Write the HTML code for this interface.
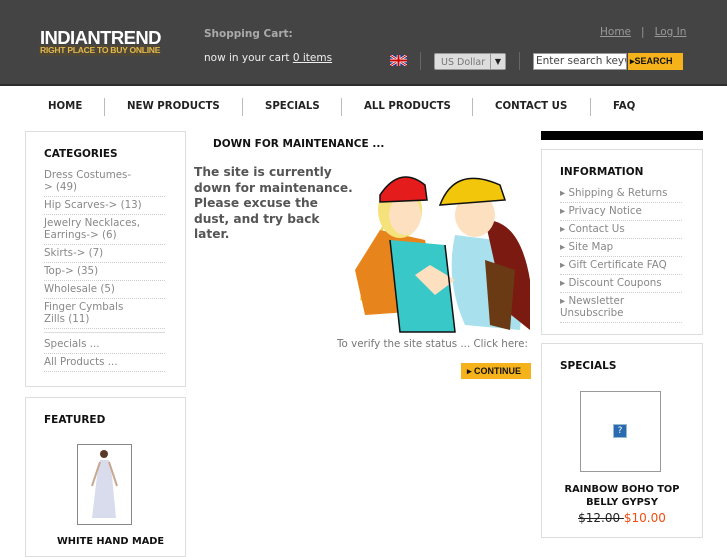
<!DOCTYPE html>
<html><head><meta charset="utf-8"><style>
*{margin:0;padding:0;box-sizing:border-box}
body{width:727px;height:545px;overflow:hidden;background:#fff;font-family:"DejaVu Sans","Liberation Sans",sans-serif;position:relative}
.a{position:absolute}
.hdr{left:0;top:0;width:727px;height:86px;background:#444;border-bottom:2px solid #2e2e2e}
.nav{font-size:10.2px;font-weight:bold;color:#222;top:101px}
.sep{top:98px;width:1px;height:18px;background:#bbb}
.box{border:1px solid #ddd;background:#fff}
.h{font-size:10.5px;font-weight:bold;color:#111}
.li{font-size:10.3px;color:#888;border-bottom:1px dotted #ccc;line-height:12px;padding:2px 0 3px}
</style></head><body>
<div class="a hdr"></div>
<div class="a" style="left:40px;top:27px;color:#fff;font:bold 18.5px 'Liberation Sans',sans-serif;letter-spacing:-0.6px">INDIANTREND</div>
<div class="a" style="left:39px;top:45px;width:121px;height:11px;background:#4e4636"></div>
<div class="a" style="left:40px;top:45px;color:#e3b84a;font:bold 8.6px 'Liberation Sans',sans-serif;letter-spacing:-0.3px">RIGHT PLACE TO BUY ONLINE</div>
<div class="a" style="left:204px;top:28px;color:#aaa;font-size:10.5px;font-weight:bold">Shopping Cart:</div>
<div class="a" style="left:204px;top:52px;color:#eee;font-size:10.5px">now in your cart <u>0 items</u></div>
<div class="a" style="left:600px;top:26px;color:#999;font-size:10.5px"><u>Home</u> &nbsp; | &nbsp; <u>Log In</u></div>
<svg class="a" style="left:390px;top:55px" width="17" height="11"><rect width="17" height="11" fill="#1a3a8a"/><path d="M0 0L17 11M17 0L0 11" stroke="#fff" stroke-width="2.5"/><path d="M0 0L17 11M17 0L0 11" stroke="#c00" stroke-width="1"/><path d="M8.5 0V11M0 5.5H17" stroke="#fff" stroke-width="3.5"/><path d="M8.5 0V11M0 5.5H17" stroke="#c00" stroke-width="2"/></svg>
<div class="a" style="left:420px;top:52px;width:1px;height:18px;background:#666"></div>
<div class="a" style="left:434px;top:53px;width:72px;height:17px;background:#ddd;border:1px solid #999;border-radius:2px;font-size:9.5px;color:#777;padding:3px 6px">US Dollar</div>
<div class="a" style="left:490px;top:54px;width:15px;height:15px;background:#ddd;border-left:1px solid #999;font-size:8px;text-align:center;line-height:15px;color:#222">▼</div>
<div class="a" style="left:519px;top:52px;width:1px;height:18px;background:#666"></div>
<div class="a" style="left:533px;top:53px;width:94px;height:17px;background:#fff;border:1px solid #999;font-size:10.5px;color:#444;padding:1px 2px;overflow:hidden;white-space:nowrap">Enter search keyw</div>
<div class="a" style="left:628px;top:53px;width:55px;height:17px;background:#f6b21a;font:bold 9px 'Liberation Sans',sans-serif;color:#111;padding:3px 0 0 2px">▸SEARCH</div>
<div class="a nav" style="left:48px">HOME</div><div class="a sep" style="left:104px"></div>
<div class="a nav" style="left:127px">NEW PRODUCTS</div><div class="a sep" style="left:242px"></div>
<div class="a nav" style="left:265px">SPECIALS</div><div class="a sep" style="left:341px"></div>
<div class="a nav" style="left:364px">ALL PRODUCTS</div><div class="a sep" style="left:472px"></div>
<div class="a nav" style="left:495px">CONTACT US</div><div class="a sep" style="left:590px"></div>
<div class="a nav" style="left:613px">FAQ</div>

<div class="a box" style="left:25px;top:131px;width:161px;height:256px"></div>
<div class="a h" style="left:44px;top:148px">CATEGORIES</div>
<div class="a" style="left:44px;top:167px;width:121px">
<div class="li">Dress Costumes-<br>&gt; (49)</div><div class="li">Hip Scarves-&gt; (13)</div><div class="li">Jewelry Necklaces, Earrings-&gt; (6)</div><div class="li">Skirts-&gt; (7)</div><div class="li">Top-&gt; (35)</div><div class="li">Wholesale (5)</div><div class="li">Finger Cymbals<br>Zills (11)</div>
<div style="border-top:1px solid #ddd;margin-top:3px;padding-top:3px"></div>
<div class="li">Specials ...</div><div class="li">All Products ...</div></div>

<div class="a box" style="left:25px;top:397px;width:161px;height:160px"></div>
<div class="a h" style="left:44px;top:414px">FEATURED</div>
<div class="a" style="left:77px;top:444px;width:55px;height:81px;border:1px solid #888;background:#fff"></div>
<svg class="a" style="left:82px;top:446px" width="45" height="77"><circle cx="22" cy="8" r="4" fill="#5a3a2a"/><path d="M18 14L27 14L30 30L34 72L10 72L15 30Z" fill="#d8dcec"/><path d="M18 16L10 40M27 16L35 40" stroke="#c8a890" stroke-width="2"/></svg>
<div class="a" style="left:57px;top:536px;font-size:9.8px;font-weight:bold;color:#111">WHITE HAND MADE</div>

<div class="a h" style="left:213px;top:138px">DOWN FOR MAINTENANCE ...</div>
<div class="a" style="left:194px;top:165px;font-size:12.2px;font-weight:bold;color:#555;line-height:15.5px;width:170px;white-space:nowrap">The site is currently<br>down for maintenance.<br>Please excuse the<br>dust, and try back<br>later.</div>
<svg class="a" style="left:345px;top:160px" width="190" height="175">
<path d="M40 60Q20 100 15 140L40 150L30 110Z" fill="#ecd85a"/>
<path d="M10 110L35 70L80 80L95 150L20 155Z" fill="#e8841c"/>
<path d="M45 80L55 172L110 172L100 85Z" fill="#38c8c8"/>
<ellipse cx="55" cy="50" rx="22" ry="28" fill="#f6e27a"/>
<ellipse cx="60" cy="55" rx="16" ry="20" fill="#fde0c0"/>
<path d="M35 35Q55 5 80 25L82 40L35 42Z" fill="#e41c1c"/>
<path d="M110 75Q100 120 120 165L175 170L180 110L150 80Z" fill="#a8e0ee"/>
<path d="M140 60Q175 60 185 120L185 170L160 150Z" fill="#7a1a10"/>
<ellipse cx="130" cy="55" rx="20" ry="22" fill="#fde0c0"/>
<path d="M95 45Q110 5 155 25L160 40Z" fill="#f2c60a"/>
<path d="M140 100L170 110L165 170L145 165Z" fill="#6a3a14"/>
<path d="M70 115L85 105L110 120L90 135Z" fill="#fde0c0"/>
<g fill="none" stroke="#111" stroke-width="1.5"><path d="M35 35Q55 5 80 25L82 40L35 42Z"/><path d="M95 45Q110 5 155 25L160 40Z"/><path d="M45 80L55 172L110 172L100 85"/></g>
</svg>
<div class="a" style="left:337px;top:338px;font-size:10.3px;color:#777">To verify the site status ... Click here:</div>
<div class="a" style="left:461px;top:363px;width:70px;height:16px;background:#f6b21a;font:bold 9px 'Liberation Sans',sans-serif;color:#111;padding:3px 0 0 6px">▸ CONTINUE</div>

<div class="a" style="left:541px;top:131px;width:162px;height:9px;background:#000"></div>
<div class="a box" style="left:541px;top:149px;width:162px;height:186px"></div>
<div class="a h" style="left:560px;top:166px">INFORMATION</div>
<div class="a" style="left:560px;top:185px;width:122px">
<div class="li">▸ Shipping &amp; Returns</div><div class="li">▸ Privacy Notice</div><div class="li">▸ Contact Us</div><div class="li">▸ Site Map</div><div class="li">▸ Gift Certificate FAQ</div><div class="li">▸ Discount Coupons</div><div class="li">▸ Newsletter Unsubscribe</div></div>
<div class="a box" style="left:541px;top:343px;width:162px;height:195px"></div>
<div class="a h" style="left:560px;top:360px">SPECIALS</div>
<div class="a" style="left:580px;top:391px;width:81px;height:81px;border:1px solid #999"></div>
<div class="a" style="left:613px;top:424px;width:14px;height:14px;background:#2a6ab0;border:1px solid #9bc;color:#fff;font-size:9px;text-align:center;line-height:12px">?</div>
<div class="a" style="left:541px;top:483px;width:162px;text-align:center;font-size:9.8px;font-weight:bold;color:#111;line-height:13px">RAINBOW BOHO TOP<br>BELLY GYPSY</div>
<div class="a" style="left:541px;top:511px;width:162px;text-align:center;font-size:12px"><s style="color:#222">$12.00 </s> <span style="color:#f04e10">$10.00</span></div>
</body></html>
